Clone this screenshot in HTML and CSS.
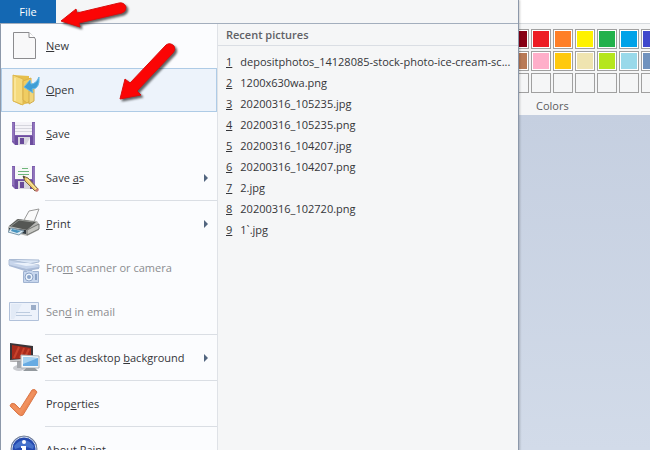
FILE: index.html
```
<!DOCTYPE html>
<html lang="en">
<head>
<meta charset="UTF-8">
<title>Paint</title>
<link rel="stylesheet" href="styles.css">
</head>
<body>

<main class="window">
  <div class="tabstrip"></div>

  <section class="ribbon">
    <div class="palette">
      <button class="swatch maroon" aria-label="Dark red"></button>
      <button class="swatch red" aria-label="Red"></button>
      <button class="swatch orange" aria-label="Orange"></button>
      <button class="swatch yellow" aria-label="Yellow"></button>
      <button class="swatch green" aria-label="Green"></button>
      <button class="swatch blue" aria-label="Turquoise"></button>
      <button class="swatch indigo" aria-label="Indigo"></button>
      <button class="swatch brown" aria-label="Brown"></button>
      <button class="swatch rose" aria-label="Rose"></button>
      <button class="swatch gold" aria-label="Gold"></button>
      <button class="swatch tan" aria-label="Light yellow"></button>
      <button class="swatch lime" aria-label="Lime"></button>
      <button class="swatch sky" aria-label="Light turquoise"></button>
      <button class="swatch steel" aria-label="Blue-gray"></button>
      <button class="swatch empty" aria-label="Empty"></button>
      <button class="swatch empty" aria-label="Empty"></button>
      <button class="swatch empty" aria-label="Empty"></button>
      <button class="swatch empty" aria-label="Empty"></button>
      <button class="swatch empty" aria-label="Empty"></button>
      <button class="swatch empty" aria-label="Empty"></button>
      <button class="swatch empty" aria-label="Empty"></button>
    </div>
    <div class="group-label">Colors</div>
  </section>

  <div class="canvas"></div>

  <div class="menu">
    <header class="menu-head">
      <button class="file-tab">File</button>
    </header>
    <div class="menu-body">
      <nav class="commands">
        <button class="item">
          <svg class="icon" viewBox="0 0 32 32">
            <path d="M4.500 2.500H20L26.500 9V28.500H4.500z" fill="#f8f8f9" stroke="#8b8b8e"/>
            <path d="M20 2.500V7.500H26" fill="#fff" stroke="#8b8b8e"/>
          </svg>
          <span class="label"><u>N</u>ew</span>
        </button>
        <button class="item selected">
          <svg class="icon" viewBox="0 0 32 32">
            <path d="M4 1L20 2V29L12 31L4 27z" fill="#e6bf4c"/>
            <path d="M4 1L14 5V31L4 27z" fill="#f5da7c" stroke="#dcb650"/>
            <path d="M14 7L22 4V26L18 29L14 26z" fill="#f0cd62" stroke="#d9b04a"/>
            <path d="M20 17L25 15V27L20 30z" fill="#f0d57c" stroke="#d2ac4c"/>
            <path d="M6 4V27" stroke="#fff1b5"/>
            <path d="M15 13L21 6L22 10Q27 10 30 3Q31 15 23 15L24 19z" fill="#3e9ed6" stroke="#68b9e5"/>
          </svg>
          <span class="label"><u>O</u>pen</span>
        </button>
        <button class="item">
          <svg class="icon" viewBox="0 0 32 32">
            <path d="M3 4H26V27H6L3 24z" fill="#7e5fae"/>
            <path d="M4 5V23M25 5V26" stroke="#a38bc9"/>
            <path d="M6 4H23V17H6z" fill="#f4f3f8"/>
            <path d="M6 7.500H23M6 10.500H23M6 13.500H23" stroke="#d5d5dd"/>
            <path d="M6 18H24V27H6z" fill="#6c4d9e"/>
            <path d="M9 19H21V27H9z" fill="#d7d5df"/>
            <path d="M11 20H15V26H11z" fill="#694b9a"/>
            <path d="M17 27L21 20V27z" fill="#f5f5f8"/>
          </svg>
          <span class="label"><u>S</u>ave</span>
        </button>
        <button class="item">
          <svg class="icon" viewBox="0 0 32 32">
            <path d="M3 4H26V27H6L3 24z" fill="#7e5fae"/>
            <path d="M4 5V23M25 5V26" stroke="#a38bc9"/>
            <path d="M6 4H23V17H6z" fill="#f7f8f8"/>
            <path d="M9 9.500H20M9 12.500H20M13 6.500H19" stroke="#6eb67c"/>
            <path d="M6 18H24V27H6z" fill="#6c4d9e"/>
            <path d="M9 19H21V27H9z" fill="#d7d5df"/>
            <path d="M11 20H15V26H11z" fill="#694b9a"/>
            <path d="M14 14L19 16L29 27L26 29L16 19z" fill="#f0cc6f" stroke="#7d6847"/>
            <path d="M14 14L16 15L15 17z" fill="#333"/>
            <path d="M26 29L29 26L30 28L28 30z" fill="#cc7d76"/>
            <path d="M18 17L27 27" stroke="#fff0ae"/>
          </svg>
          <span class="label">Save <u>a</u>s</span>
          <span class="more"></span>
        </button>
        <hr class="rule">
        <button class="item">
          <svg class="icon wide" viewBox="0 0 32 32">
            <path d="M16 12L21 3L31 1L26 14z" fill="#fafafa" stroke="#999"/>
            <path d="M0 19L9 11L29 13L31 16V22L19 28L0 23z" fill="#b7b8b5"/>
            <path d="M1 18L10 11L28 14L19 22z" fill="#555754"/>
            <path d="M3 18L11 12L25 14" fill="none" stroke="#949793"/>
            <path d="M19 22L31 16V21L19 27z" fill="#c4c5c1" stroke="#737572"/>
            <path d="M1 20L18 22V26L1 23z" fill="#303a41"/>
            <path d="M3 20L16 23L11 27L0 24z" fill="#dcebf3" stroke="#7b98aa"/>
            <path d="M4 21L13 23L9 25L3 23z" fill="#4894bf"/>
          </svg>
          <span class="label"><u>P</u>rint</span>
          <span class="more"></span>
        </button>
        <button class="item" disabled>
          <svg class="icon wide" viewBox="0 0 32 32">
            <path d="M1 7.500H8L31 8V10L20 12z" fill="#dbe6f5" stroke="#a9bad3"/>
            <path d="M1 8L19 11L31 13V16L20 18L1 13z" fill="#c7d5eb" stroke="#b1c1d8"/>
            <path d="M5 11L18 14L30 13L20 11z" fill="#eaf1fb"/>
            <path d="M1 13V14L17 19L31 17V15L18 17z" fill="#a9bad6"/>
            <path d="M15.500 19.500H19L20 18.500H24L25 19.500H30.500V30.500H15.500z" fill="#c7d6ed" stroke="#a0b3d1"/>
            <circle cx="21" cy="25" r="4" fill="#edf4fc" stroke="#8da3c6"/>
            <circle cx="21" cy="25" r="2" fill="#8ca5c9"/>
            <path d="M28 22V28" stroke="#8ba2c5" stroke-width="2"/>
          </svg>
          <span class="label">Fro<u>m</u> scanner or camera</span>
        </button>
        <button class="item" disabled>
          <svg class="icon wide" viewBox="0 0 32 32">
            <path d="M1.500 6.500H30.500V24.500H1.500z" fill="#edf2fb" stroke="#b1c1da"/>
            <path d="M3 8H14L6 23H3z" fill="#e2eaf6"/>
            <path d="M8 16.500H22M8 19.500H24" stroke="#bccbdf"/>
            <path d="M23 9H28V14H23z" fill="#9badc8"/>
          </svg>
          <span class="label">Sen<u>d</u> in email</span>
        </button>
        <hr class="rule">
        <button class="item">
          <svg class="icon wide" viewBox="0 0 32 32">
            <ellipse cx="11" cy="26" rx="6" ry="3" fill="#c9cbd0"/>
            <path d="M9 18H14V26H9z" fill="#a3a6ab"/>
            <path d="M2 1L25 4V18L2 20z" fill="#393438"/>
            <path d="M4 3L23 6V16L4 17z" fill="#a82a1c"/>
            <path d="M6 16L11 5M12 16L16 6M17 15L21 7" fill="none" stroke="#c8432c" stroke-width="2"/>
            <path d="M2 18L25 16V18L2 20z" fill="#c8c8ca"/>
            <path d="M13 13L31 14V26H13z" fill="#f5f8f9" stroke="#a8b0b7"/>
            <path d="M15 15L30 16V24H15z" fill="#66abe3"/>
            <path d="M15 15L30 16L15 22z" fill="#a6d2f0"/>
            <path d="M18 26H27L30 29H15z" fill="#93999e"/>
          </svg>
          <span class="label">Set as desktop <u>b</u>ackground</span>
          <span class="more"></span>
        </button>
        <hr class="rule">
        <button class="item">
          <svg class="icon" viewBox="0 0 32 32">
            <path d="M1 18Q2 14 6 16L11 21L23 2Q26 0 28 4L14 27Q12 29 9 26z" fill="#ee8854" stroke="#d9784a"/>
            <path d="M4 18L11 24L25 4" fill="none" stroke="#f0915f" stroke-width="3"/>
          </svg>
          <span class="label">Prop<u>e</u>rties</span>
        </button>
        <hr class="rule">
        <button class="item">
          <svg class="icon" viewBox="0 0 32 32">
            <circle cx="15" cy="15" r="13" fill="#2449ae" stroke="#7c8593"/>
            <circle cx="15" cy="15" r="12" fill="none" stroke="#d5dfee"/>
            <path d="M5 12Q15 0 25 12L24 15Q15 11 6 15z" fill="#4672cb"/>
            <circle cx="15" cy="8" r="2" fill="#fff"/>
            <path d="M12 12H17V21H19V23H11V21H13V14H12z" fill="#fff"/>
          </svg>
          <span class="label">Abou<u>t</u> Paint</span>
        </button>
      </nav>
      <section class="recent">
        <h2>Recent pictures</h2>
        <ol class="files">
          <li><a href="#"><u>1</u><span>depositphotos_14128085-stock-photo-ice-cream-sc...</span></a></li>
          <li><a href="#"><u>2</u><span>1200x630wa.png</span></a></li>
          <li><a href="#"><u>3</u><span>20200316_105235.jpg</span></a></li>
          <li><a href="#"><u>4</u><span>20200316_105235.png</span></a></li>
          <li><a href="#"><u>5</u><span>20200316_104207.jpg</span></a></li>
          <li><a href="#"><u>6</u><span>20200316_104207.png</span></a></li>
          <li><a href="#"><u>7</u><span>2.jpg</span></a></li>
          <li><a href="#"><u>8</u><span>20200316_102720.png</span></a></li>
          <li><a href="#"><u>9</u><span>1`.jpg</span></a></li>
        </ol>
      </section>
    </div>
  </div>

  <!-- arrows pointing at File and Open -->
  <svg class="arrows" viewBox="0 0 190 110">
    <path d="M61 21L76 9L77 13L119 3Q124 2 126 7Q126 12 122 13L79 23L80 27z"/>
    <path d="M120 99L125 79L130 83L166 45Q170 42 174 46Q176 50 173 53L137 91L141 95z"/>
  </svg>
</main>

</body>
</html>
```
FILE: styles.css
```
* {
    box-sizing: border-box;
}

body {
    margin: 0;
    font-family: "Open Sans", "Noto Sans", sans-serif;
    font-size: 11px;
    line-height: 16px;
    color: #343539;
}

button {
    font: inherit;
    color: inherit;
    border: 0;
    padding: 0;
    background: none;
}

.window {
    position: relative;
    height: 100vh;
    overflow: hidden;
    display: flex;
    flex-direction: column;
    background: #fff;
}

/* ribbon behind the menu */

.tabstrip {
    height: 23px;
}

.ribbon {
    border-top: 1px solid #d6dade;
    background: #f5f6f7;
    padding: 5px 0 1px 509px;
}

.palette {
    display: grid;
    grid-template-columns: repeat(7, 20px);
    grid-auto-rows: 20px;
    gap: 2px;
}

.swatch {
    border: 1px solid #a0a0a0;
    box-shadow: inset 0 0 0 1px #fff;
}

.swatch.empty {
    box-shadow: none;
}

.group-label {
    padding: 5px 0 0 27px;
    color: #5b5c60;
}

.maroon { background-color: #880015; }
.red { background-color: #ed1c24; }
.orange { background-color: #ff7f27; }
.yellow { background-color: #fff200; }
.green { background-color: #22b14c; }
.blue { background-color: #00a2e8; }
.indigo { background-color: #3f48cc; }
.brown { background-color: #b97a57; }
.rose { background-color: #ffaec9; }
.gold { background-color: #ffc90e; }
.tan { background-color: #efe4b0; }
.lime { background-color: #b5e61d; }
.sky { background-color: #99d9ea; }
.steel { background-color: #7092be; }

.canvas {
    flex: 1;
    background: linear-gradient(#c5cfe0, #d2dbe9);
}

/* file menu */

.menu {
    position: absolute;
    top: 0;
    left: 0;
    width: 519px;
    background: #f5f6f7;
    border-right: 1px solid #8c98aa;
    box-shadow: 1px 0 2px rgba(0, 0, 0, 0.2);
}

.menu-head {
    display: flex;
}

.file-tab {
    width: 56px;
    height: 23px;
    background: #1468b3;
    color: #fff;
}

.menu-body {
    display: flex;
    border-top: 1px solid #a3aebd;
    border-left: 1px solid #8c98aa;
}

.commands {
    width: 217px;
    background: #fbfcfe;
    border-right: 1px solid #dfe2e7;
}

.item {
    display: flex;
    align-items: center;
    width: 100%;
    height: 44px;
    padding: 0 8px 0 7px;
    border: 1px solid transparent;
    text-align: left;
}

.item:disabled {
    color: #8b8c90;
}

.selected {
    background: #edf3fb;
    border-color: #aecbe6;
}

.icon {
    width: 32px;
    height: 32px;
    margin-right: 5px;
}

.icon.wide {
    margin-left: -1px;
    margin-right: 6px;
}

.label {
    flex: 1;
    white-space: nowrap;
}

.more {
    border-left: 4px solid #52657f;
    border-top: 4px solid transparent;
    border-bottom: 4px solid transparent;
}

.rule {
    height: 2px;
    margin: 0 0 0 44px;
    border: 0;
    border-top: 1px solid #dadee4;
}

/* recent pictures */

.recent {
    flex: 1;
    min-width: 0;
}

.recent h2 {
    margin: 0;
    padding: 3px 8px 2px;
    border-bottom: 1px solid #dadee4;
    font-size: 11px;
    font-weight: 600;
    color: #606166;
}

.files {
    list-style: none;
    margin: 0;
    padding: 5px 4px 6px 8px;
}

.files a {
    display: flex;
    gap: 8px;
    line-height: 21px;
    color: inherit;
    text-decoration: none;
}

.files span {
    white-space: nowrap;
}

.arrows {
    position: absolute;
    top: 0;
    left: 0;
    width: 190px;
    height: 110px;
    pointer-events: none;
    fill: #fb0505;
    stroke: #d90d0d;
    filter: drop-shadow(2px 2px 1px rgba(0, 0, 0, 0.6));
}
```
